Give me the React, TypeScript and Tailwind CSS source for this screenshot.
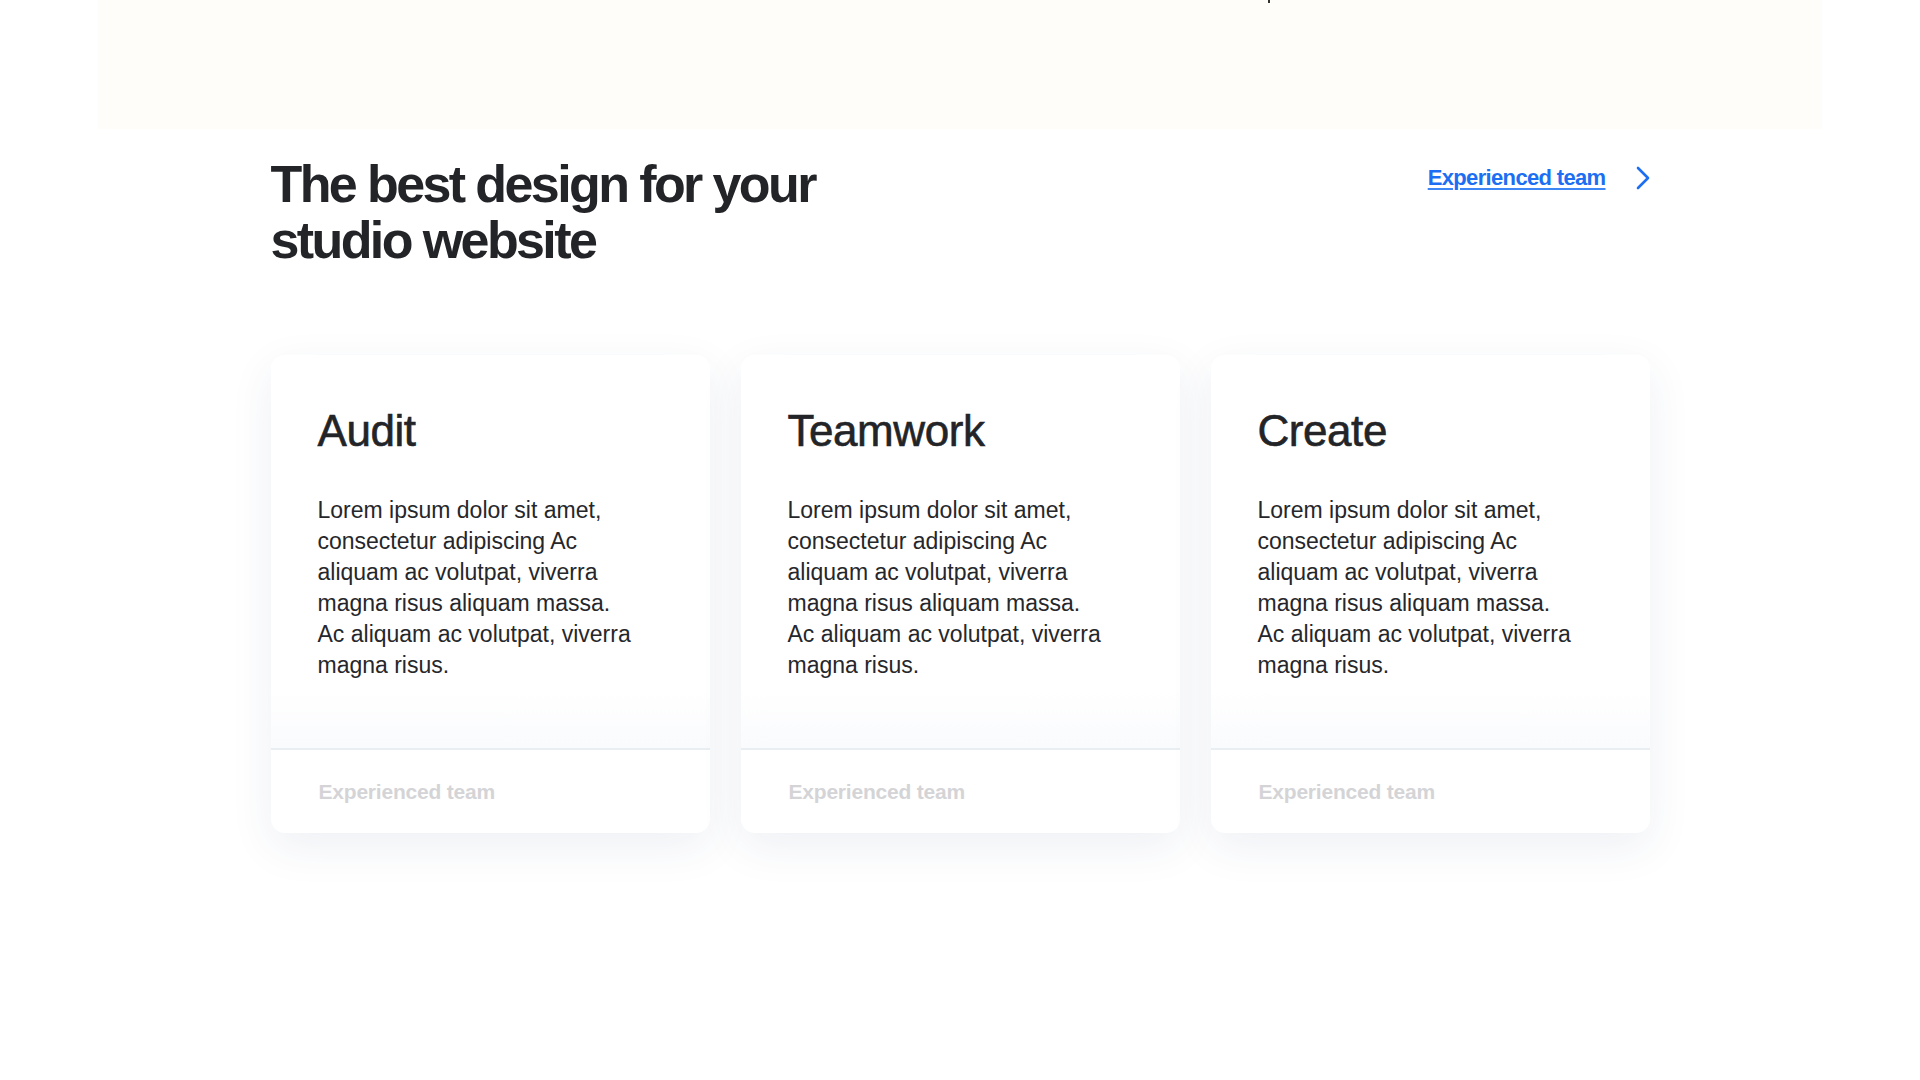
const cards = [
  { title: "Audit" },
  { title: "Teamwork" },
  { title: "Create" },
];

const lines = [
  "Lorem ipsum dolor sit amet,",
  "consectetur adipiscing Ac",
  "aliquam ac volutpat, viverra",
  "magna risus aliquam massa.",
  "Ac aliquam ac volutpat, viverra",
  "magna risus.",
];

const Card = ({ title }: { title: string }) => {
  return (
    <div className="flex flex-col rounded-[14px] bg-white shadow-[0_14px_44px_rgba(40,70,120,0.08)]">
      <div className="h-[393px] rounded-t-[14px] bg-gradient-to-b from-white from-85% to-[#fafbfd] px-[47px] pt-[55px]">
        <h3 className="text-[44px] leading-[42px] tracking-[-0.01em] text-[#232428] [-webkit-text-stroke:0.6px_#232428]">
          {title}
        </h3>
        <p className="mt-[43px] text-[23px] leading-[31px] text-[#26272b]">
          {lines.map((l) => (
            <span key={l} className="block whitespace-nowrap">
              {l}
            </span>
          ))}
        </p>
      </div>
      <div className="border-t-2 border-[#e9eef3] px-[48px] pt-[30px] pb-[27px]">
        <span className="text-[21px] leading-[24px] font-bold tracking-[-0.01em] text-[#d4d4d7]">
          Experienced team
        </span>
      </div>
    </div>
  );
};

const App = () => {
  return (
    <div className="min-h-screen bg-white font-['Liberation_Sans',Arial,sans-serif]">
      <div className="relative mx-[98px] h-[129px] bg-[#fffdf9]">
        <span className="absolute left-[1170px] top-0 h-[3px] w-[2px] bg-[#333]" />
      </div>

      <div className="mx-auto w-[1379px]">
        <div className="flex items-start justify-between pt-[27px]">
          <h2 className="text-[52px] leading-[56px] font-bold tracking-[-0.05em] text-[#232428]">
            The best design for your
            <br />
            studio website
          </h2>
          <a
            href="#"
            className="mt-[8px] flex items-center gap-[30px] text-[#1c6ef2]"
          >
            <span className="text-[22px] leading-[28px] font-bold tracking-[-0.03em] underline decoration-[#3d86f5] decoration-2 underline-offset-[3px]">
              Experienced team
            </span>
            <svg width="14" height="24" viewBox="0 0 14 24" fill="none">
              <path
                d="M2 2l10 10L2 22"
                stroke="#1c6ef2"
                strokeWidth="2.6"
                strokeLinecap="round"
                strokeLinejoin="round"
              />
            </svg>
          </a>
        </div>

        <div className="mt-[87px] grid grid-cols-3 gap-[31px]">
          {cards.map((c) => (
            <Card key={c.title} title={c.title} />
          ))}
        </div>
      </div>
    </div>
  );
};

export default App;
